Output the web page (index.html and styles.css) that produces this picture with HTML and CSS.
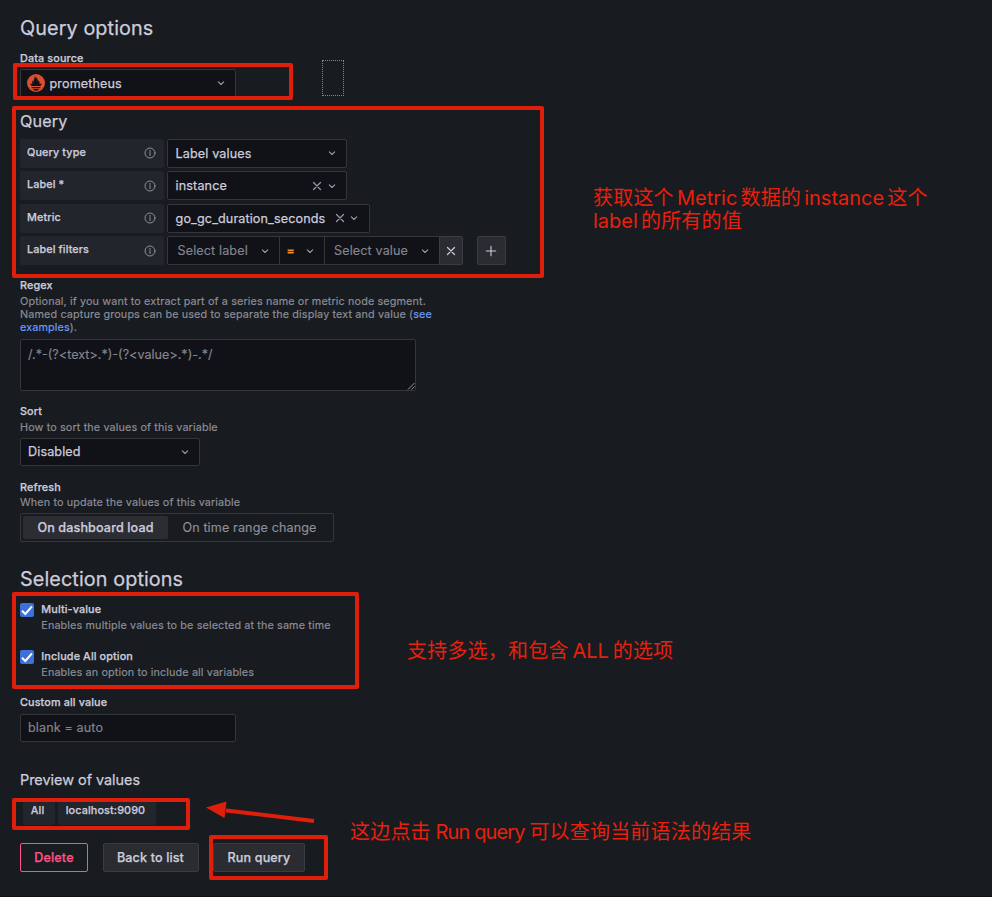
FILE: index.html
```
<!DOCTYPE html>
<html lang="en">
<head>
<meta charset="utf-8">
<title>Query options</title>
<link rel="stylesheet" href="styles.css">
</head>
<body>
<svg class="defs" width="0" height="0">
  <symbol id="chev" viewBox="0 0 14 14"><path d="M4.3 5.8 7 8.5l2.700-2.700" /></symbol>
  <symbol id="x" viewBox="0 0 14 14"><path d="M3.500 3.500l7 7M10.500 3.500l-7 7" /></symbol>
  <symbol id="plus" viewBox="0 0 14 14"><path d="M7 2.300v9.400M2.300 7h9.400" /></symbol>
  <symbol id="info" viewBox="0 0 14 14"><circle cx="7" cy="7" r="5" /><path d="M7 6.500v3M7 4.400v1" /></symbol>
  <symbol id="tick" viewBox="0 0 14 14"><path d="M2 7.800 5.300 11 12 3.300" /></symbol>
</svg>
<main class="page">
  <h2 class="title">Query options</h2>
  <div class="label ds-label"><span>Data source</span></div>
  <div class="select ds">
    <svg class="logo" viewBox="0 0 18 18"><circle cx="9" cy="9" r="9" fill="#da4e31"/><path fill="#111217" d="M9 16.700c-1.500 0-2.700-.8-2.700-1.700h5.400c0 .9-1.200 1.700-2.700 1.700zM4.700 12.900h8.600v1.300H4.700zM4.700 12.100C3.900 11.300 3.500 10.400 3.300 9.600l2.200.4C5 8.700 5 7.300 5.700 6.300c.1 1 .5 1.500.9 1.700C6.500 5.500 7.900 4.300 7.700 2.300c.9.5 1.200 1.700 1.300 2.700.4-.5.500-1.300.4-1.900 1.200 1.100.9 3 1.900 4.600.2-.5.200-1.100 0-1.700 1.400 1.200 1.500 2.800 1.200 4l2.200-.4c-.2.800-.6 1.700-1.400 2.500z"/></svg>
    <span>prometheus</span>
    <svg class="ic end"><use href="#chev"/></svg>
  </div>
  <h3 class="subtitle query-title">Query</h3>
  <div class="rows">
    <div class="row"><div class="rl"><span>Query type</span><svg class="ic info"><use href="#info"/></svg></div>
      <div class="select w200"><span>Label values</span><svg class="ic end"><use href="#chev"/></svg></div></div>
    <div class="row"><div class="rl"><span>Label *</span><svg class="ic info"><use href="#info"/></svg></div>
      <div class="select w200"><span>instance</span><svg class="ic end clear"><use href="#x"/></svg><svg class="ic"><use href="#chev"/></svg></div></div>
    <div class="row"><div class="rl"><span>Metric</span><svg class="ic info"><use href="#info"/></svg></div>
      <div class="select metric"><span>go_gc_duration_seconds</span><svg class="ic end clear"><use href="#x"/></svg><svg class="ic"><use href="#chev"/></svg></div></div>
    <div class="row"><div class="rl"><span>Label filters</span><svg class="ic info"><use href="#info"/></svg></div>
      <div class="filters">
        <div class="select muted f-label"><span>Select label</span><svg class="ic end"><use href="#chev"/></svg></div>
        <div class="select f-op"><span class="op">=</span><svg class="ic end"><use href="#chev"/></svg></div>
        <div class="select muted f-value"><span>Select value</span><svg class="ic end"><use href="#chev"/></svg></div>
        <div class="square remove"><svg class="ic"><use href="#x"/></svg></div>
        <div class="square add"><svg class="ic"><use href="#plus"/></svg></div>
      </div></div>
  </div>

  <div class="label regex-label"><span>Regex</span></div>
  <p class="desc regex-desc">Optional, if you want to extract part of a series name or metric node segment.<br>Named capture groups can be used to separate the display text and value (<a>see<br>examples</a>).</p>
  <div class="textarea"><span>/.*-(?&lt;text&gt;.*)-(?&lt;value&gt;.*)-.*/</span><svg class="grip" viewBox="0 0 8 8"><path d="M1 7.500 7.500 1M4.500 7.500l3-3"/></svg></div>

  <div class="label sort-label"><span>Sort</span></div>
  <p class="desc sort-desc">How to sort the values of this variable</p>
  <div class="select w200 sort"><span>Disabled</span><svg class="ic end"><use href="#chev"/></svg></div>

  <div class="label refresh-label"><span>Refresh</span></div>
  <p class="desc refresh-desc">When to update the values of this variable</p>
  <div class="radio"><div class="on">On dashboard load</div><div class="off">On time range change</div></div>

  <h2 class="title selection">Selection options</h2>
  <div class="check"><div class="box"><svg><use href="#tick"/></svg></div><div><div class="label">Multi-value</div><p class="desc">Enables multiple values to be selected at the same time</p></div></div>
  <div class="check"><div class="box"><svg><use href="#tick"/></svg></div><div><div class="label">Include All option</div><p class="desc">Enables an option to include all variables</p></div></div>
  <div class="label custom-label"><span>Custom all value</span></div>
  <div class="select muted custom"><span>blank = auto</span></div>

  <h4 class="preview">Preview of values</h4>
  <div class="tags"><div class="tag all">All</div><div class="tag host">localhost:9090</div></div>
  <div class="buttons"><div class="btn delete">Delete</div><div class="btn back">Back to list</div><div class="btn run">Run query</div></div>
</main>

<div class="focus"></div>
<div class="mark m1"></div>
<div class="mark m2"></div>
<div class="mark m3"></div>
<div class="mark m4"></div>
<div class="mark m5"></div>
<svg class="arrow" viewBox="0 0 112 24"><path d="M20 10.500 108 21" /><polygon points="0,7.500 20.500,1.500 18.500,18" /></svg>
<div class="note n1">获取这个 <span>Metric</span> 数据的 <span>instance</span> 这个<br><span>label</span> 的所有的值</div>
<div class="note n2">支持多选，和包含 <span>ALL</span> 的选项</div>
<div class="note n3">这边点击 <span>Run query</span> 可以查询当前语法的结果</div>
</body>
</html>
```
FILE: styles.css
```
* { box-sizing: border-box; margin: 0; padding: 0; }
body {
  position: relative;
  width: 992px;
  height: 897px;
  overflow: hidden;
  background: #181b1f;
  border-bottom: 1px solid #111017;
  color: #ccccdc;
  font-family: Inter, "Noto Sans CJK SC", sans-serif;
  font-size: 12.6px;
  letter-spacing: 0.12px;
}
.defs { position: absolute; }
.page { display: flex; flex-direction: column; align-items: flex-start; padding: 16px 20px 0; -webkit-text-stroke: 0.25px currentColor; }
.title { font-size: 19.8px; font-weight: 400; line-height: 24px; letter-spacing: 0.1px; }
.subtitle { font-size: 16.2px; font-weight: 400; line-height: 20px; letter-spacing: 0.1px; }
.label { font-size: 10.8px; font-weight: 500; line-height: 14px; letter-spacing: 0.13px; }
.desc { font-size: 10.8px; line-height: 13px; color: #8e8f9a; letter-spacing: 0.13px; white-space: nowrap; -webkit-text-stroke-width: 0.15px; }
.desc a { color: #6e9fff; }
.select {
  display: flex;
  align-items: center;
  height: 28.8px;
  padding: 0 7px;
  background: #111217;
  border: 1px solid #34363c;
  border-radius: 2px;
  white-space: nowrap;
}
.muted { color: #84858f; -webkit-text-stroke-width: 0.15px; }
.ic { width: 14px; height: 14px; flex: none; fill: none; stroke: #9a9ba6; stroke-width: 1.1; stroke-linecap: round; stroke-linejoin: round; }
.end { margin-left: auto; }
.clear { margin-right: 1px; }
.ds-label { margin-top: 12px; }
.ds { width: 216px; margin-top: 3px; padding-left: 6px; }
.logo { width: 18px; height: 18px; margin-right: 4.5px; }
.query-title { margin-top: 13.2px; }
.rows { display: flex; flex-direction: column; gap: 3.6px; margin-top: 8px; }
.row { display: flex; gap: 3px; height: 28.8px; }
.rl {
  display: flex;
  align-items: center;
  justify-content: space-between;
  width: 144px;
  padding: 0 7px;
  background: #22252b;
  border-radius: 2px;
  font-size: 10.8px;
  font-weight: 500;
}
.rl span { margin-top: -2px; }
.info { stroke: #8e8f9a; stroke-width: 1; }
.w200 { width: 180px; }
.row .select { padding-left: 7.6px; }
.metric { width: 203px; padding-right: 8px; }
.metric .clear { margin-right: 0; }
.filters { display: flex; }
.row .f-label { width: 113px; padding-left: 9.5px; border-radius: 2px 0 0 2px; }
.f-op { width: 46px; margin-left: -1px; border-radius: 0; }
.op { color: #ff8f1f; font-size: 12px; font-weight: 600; }
.row .f-op { padding-left: 6.5px; }
.row .f-value { width: 115.5px; margin-left: -1px; padding-left: 9px; border-radius: 0; }
.square { display: flex; align-items: center; justify-content: center; height: 28.8px; background: #2a2c31; border: 1px solid #3a3c42; border-radius: 2px; }
.square .ic { stroke: #ccccdc; }
.remove { width: 24.5px; margin-left: -1px; }
.remove .ic, .clear { stroke-width: 1.2; }
.add { width: 29px; margin-left: 13.6px; }
.regex-label { margin-top: 14px; }
.regex-desc { margin-top: 2.5px; }
.textarea { display: flex; justify-content: space-between; width: 396px; height: 52px; margin-top: 5px; padding: 7px 0 0 7px; line-height: 16px; background: #111217; border: 1px solid #34363c; border-radius: 2px; color: #84858f; letter-spacing: 0; -webkit-text-stroke-width: 0.15px; }
.grip { width: 8px; height: 8px; align-self: flex-end; fill: none; stroke: #b5b6bd; stroke-width: .8; }
.sort-label { margin-top: 13.5px; }
.sort-desc { margin: 2px 0 4px; }
.sort { height: 28px; }
.refresh-label { margin-top: 15px; }
.refresh-desc { margin: 1.5px 0 3.4px; }
.radio { display: flex; width: 314px; height: 29px; padding: 2px; border: 1px solid #34363c; border-radius: 2px; line-height: 23px; text-align: center; }
.on { width: 145px; background: #2b2d33; border-radius: 2px; font-weight: 500; }
.off { width: 163px; color: #8e8f9a; -webkit-text-stroke-width: 0.15px; }
.selection { margin-top: 25.4px; letter-spacing: 0.1px; }
.check { display: flex; gap: 7.3px; height: 47px; margin-top: 11.6px; }
.check + .check { margin-top: 0; }
.check .desc { margin-top: 2px; }
.check .label { margin-top: 0.4px; }
.box { width: 14px; height: 14px; margin-top: 0.5px; background: #3d71d9; border-radius: 2px; }
.box svg { display: block; width: 14px; height: 14px; fill: none; stroke: #fff; stroke-width: 2; }
.custom-label { margin-top: -0.7px; }
.custom { width: 216px; height: 28.2px; margin-top: 3.5px; }
.preview { margin-top: 28.5px; font-size: 14.4px; font-weight: 400; line-height: 20px; letter-spacing: 0; }
.tags { display: flex; gap: 3px; margin: 9px 0 18px 3px; }
.tag { height: 26px; padding-top: 4px; background: #22252b; border-radius: 2px; font-size: 10.8px; font-weight: 500; line-height: 16px; text-align: center; }
.all { width: 32px; padding-right: 3px; }
.host { width: 98px; padding-right: 3px; }
.buttons { display: flex; gap: 14.5px; }
.btn { height: 29px; background: #2a2c31; border: 1px solid #3a3c42; border-radius: 2px; font-weight: 500; line-height: 27px; text-align: center; white-space: nowrap; }
.delete { width: 68px; background: none; border-color: #ff5286; color: #ff5286; }
.back { width: 96px; }
.run { width: 92px; }

.focus { position: absolute; left: 322px; top: 60px; width: 22px; height: 36px; border: 1px dotted #85868c; }
.mark { position: absolute; border: 4px solid #df1f0c; border-radius: 2px; }
.m1 { left: 13px; top: 63px; width: 280px; height: 37px; }
.m2 { left: 12px; top: 106px; width: 532px; height: 172px; }
.m3 { left: 12px; top: 592px; width: 347px; height: 97px; }
.m4 { left: 12px; top: 798px; width: 178px; height: 32px; }
.m5 { left: 209px; top: 835px; width: 119px; height: 45px; }
.arrow { position: absolute; left: 206px; top: 800px; width: 112px; height: 24px; fill: #df1f0c; stroke: #df1f0c; stroke-width: 4; }
.arrow polygon { stroke: none; }
.note { position: absolute; color: #e8200d; font-size: 20px; line-height: 23px; letter-spacing: 0.2px; white-space: nowrap; }
.note span { letter-spacing: 0; }
.n1 { left: 593px; top: 187px; word-spacing: -2.7px; }
.n2 { left: 407px; top: 640px; word-spacing: -2px; }
.n3 { left: 350px; top: 821px; word-spacing: -1.2px; }
.n3 span { letter-spacing: -0.85px; word-spacing: 0; }
```
